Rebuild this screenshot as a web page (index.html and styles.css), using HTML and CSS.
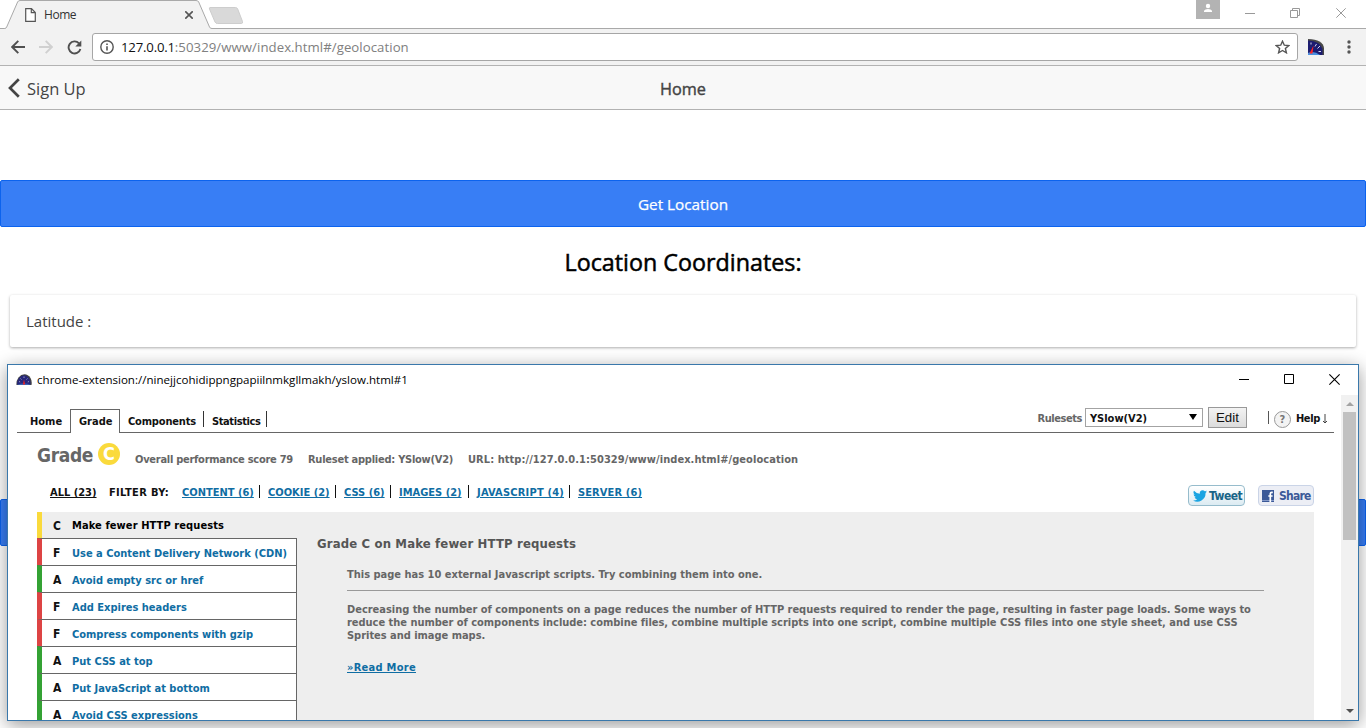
FILE: index.html
```html
<!DOCTYPE html>
<html lang="en">
<head>
<meta charset="utf-8">
<title>Home</title>
<link rel="stylesheet" href="styles.css">
</head>
<body>
<svg class="defs" width="0" height="0" aria-hidden="true">
  <symbol id="close" viewBox="0 0 10 10"><path d="M.3.3l9.4 9.4M9.7.3L.3 9.7" stroke="currentColor" fill="none"/></symbol>
</svg>

<header class="tabstrip">
  <svg class="tab-shape" width="246" height="29" viewBox="0 0 246 29">
    <path d="M0 28.5H4.5Q6 28.5 6.700 27L17.600 2Q18.300 .5 20 .5H196Q198 .5 198.700 2L209.500 27Q210.200 28.500 212 28.500H246V29H0Z" fill="#f2f2f2"/>
    <path d="M0 28.5H4.500Q6 28.500 6.700 27L17.600 2Q18.300 .5 20 .5H196Q198 .5 198.700 2L209.500 27Q210.200 28.500 212 28.500H246" fill="none" stroke="#a9a9a9"/>
    <path d="M210 7.500H235.500Q237 7.500 237.700 9L242.500 21.500Q243 23.500 241.500 23.500H217.500Q215.800 23.500 215 22L209.500 9Q209 7.500 210 7.500Z" fill="#d9d9d9" stroke="#cdcdcd"/>
  </svg>
  <div class="tab">
    <svg width="11" height="14" viewBox="0 0 11 14"><path d="M.7.7H6.500L10.300 4.500V13.300H.7ZM6.300 1V4.700H10" fill="#fff" stroke="#555" stroke-width="1.200"/></svg>
    <span class="tab-title">Home</span>
    <svg class="tab-close" width="8" height="8"><use href="#close"/></svg>
  </div>
  <div class="win-controls">
    <span class="user"><svg width="24" height="19" viewBox="0 0 24 19"><circle cx="12" cy="6" r="2.200" fill="#fff"/><path d="M8 12V10.700Q9 9 12 9T16 10.700V12Z" fill="#fff"/></svg></span>
    <svg class="min" width="10" height="10"><path d="M0 5.500H10" stroke="#999"/></svg>
    <svg class="restore" width="10" height="10"><path d="M.5 2.500H7.500V9.500H.5ZM2.500 2.500V.5H9.500V7.500H7.500" fill="none" stroke="#999"/></svg>
    <svg class="x" width="10" height="10"><use href="#close"/></svg>
  </div>
</header>

<div class="toolbar">
  <svg class="back" width="14" height="14" viewBox="0 0 14 14"><path d="M14 7H1.500M7.300 .8L1.200 7L7.300 13.200" fill="none" stroke="#505050" stroke-width="1.900"/></svg>
  <svg class="fwd" width="14" height="14" viewBox="0 0 14 14"><path d="M0 7H12.500M6.700 .8L12.800 7L6.700 13.200" fill="none" stroke="#d0d0d0" stroke-width="1.900"/></svg>
  <svg class="reload" width="15" height="15" viewBox="0 0 15 15"><path d="M12 3.300A6 6 0 1 0 13.400 9" fill="none" stroke="#505050" stroke-width="1.900"/><path d="M14.300 .5V6.500H8.300Z" fill="#505050"/></svg>
  <div class="omnibox">
    <svg width="14" height="14" viewBox="0 0 14 14"><circle cx="7" cy="7" r="6.200" fill="none" stroke="#555" stroke-width="1.400"/><path d="M7 6.200V10.500M7 3.500V5" stroke="#555" stroke-width="1.600"/></svg>
    <span class="url"><b>127.0.0.1</b>:50329/www/index.html#/geolocation</span>
    <svg class="star" width="15" height="14" viewBox="0 0 15 14"><path d="M7.500 1.200L9.300 5.200L13.700 5.600L10.400 8.500L11.400 12.800L7.500 10.500L3.600 12.800L4.600 8.500L1.300 5.600L5.700 5.200Z" fill="none" stroke="#555" stroke-width="1.400"/></svg>
  </div>
  <svg class="ext" width="16" height="16" viewBox="0 0 16 16"><path d="M0 0Q15 .5 16 9V16H0Z" fill="#484848"/><path d="M0 1.500Q12.500 2 14.500 10V16H0Z" fill="#1c1c70"/><path d="M0 14Q6 11.500 12 16H0Z" fill="#4a8fe0"/><path d="M3 3.500V5.500M8.500 5L7 7.500M12 7L9.500 9.500M13 12.500H10.500" stroke="#d5d5ee"/><path d="M5.500 6.500L4.500 14.500H1.500Z" fill="#f22"/></svg>
  <svg class="dots" width="4" height="14"><circle cx="2" cy="2" r="1.700" fill="#555"/><circle cx="2" cy="7" r="1.700" fill="#555"/><circle cx="2" cy="12" r="1.700" fill="#555"/></svg>
</div>

<main class="app">
  <nav class="app-bar">
    <a class="app-back"><svg width="12" height="20" viewBox="0 0 12 20"><path d="M10.800 1.200L2 10L10.800 18.800" fill="none" stroke="#444" stroke-width="2.700"/></svg>Sign Up</a>
    <h1>Home</h1>
    <span class="app-side"></span>
  </nav>
  <button class="btn btn-get">Get Location</button>
  <h2>Location Coordinates:</h2>
  <div class="card">Latitude :</div>
  <button class="btn btn-next"></button>
</main>

<section class="popup">
  <div class="titlebar">
    <svg width="16" height="11" viewBox="0 0 16 11"><path d="M.5 11Q0 7 2.500 3.500Q5 .3 8.500 .3Q12 .3 14.500 4Q16.300 7 15.500 11Z" fill="#444"/><path d="M1 10.500Q.8 7 3 4Q5.300 1.300 8 1.300Q11 1.300 13 4Q15 7 14.500 10.500Z" fill="#26267c"/><path d="M3 7.500L4.200 8M4.500 4.500L5.500 5.500M8 2.500V4M11.500 4.500L10.500 5.500M13 7.500L11.800 8" stroke="#99b"/><path d="M1.200 10.800Q8 8 14.500 10.800Z" fill="#3a6fd0"/><path d="M6.800 10.500L8 5.500L9.200 10.500Z" fill="#e22"/></svg>
    <span class="title">chrome-extension://ninejjcohidippngpapiilnmkgllmakh/yslow.html#1</span>
    <span class="title-controls">
      <svg width="10" height="10"><path d="M0 5.500H10" stroke="#000"/></svg>
      <svg width="10" height="10"><path d="M.5.5H9.500V9.500H.5Z" fill="none" stroke="#000"/></svg>
      <svg width="11" height="11"><use href="#close"/></svg>
    </span>
  </div>
  <div class="view">
    <div class="page">
      <div class="tabs">
        <a class="t-home">Home</a><a class="t-grade">Grade</a><a class="t-comp">Components</a><a class="t-stat">Statistics</a>
        <div class="tools">
          <label>Rulesets</label>
          <span class="select">YSlow(V2)<svg width="8" height="6"><path d="M0 0H8L4 6Z"/></svg></span>
          <button class="edit">Edit</button>
          <i class="bar"></i>
          <span class="q">?</span>
          <span class="help">Help</span>
          <svg class="arrow" width="6" height="10" viewBox="0 0 6 10"><path d="M3 0V9M1 7L3 9L5 7" fill="none" stroke="#444"/></svg>
        </div>
      </div>
      <div class="summary">
        <span class="grade">Grade</span><span class="badge">C</span>
        <span class="score">Overall performance score 79</span><span class="rules">Ruleset applied: YSlow(V2)</span><span class="link">URL: http://127.0.0.1:50329/www/index.html#/geolocation</span>
      </div>
      <div class="filters">
        <a class="all">ALL (23)</a><span class="by">FILTER BY:</span>
        <span class="f f1"><a>CONTENT (6)</a></span><span class="f f2"><a>COOKIE (2)</a></span><span class="f f3"><a>CSS (6)</a></span><span class="f f4"><a>IMAGES (2)</a></span><span class="f f5"><a>JAVASCRIPT (4)</a></span><span class="f f6"><a>SERVER (6)</a></span>
        <span class="social tweet"><svg width="14" height="12" viewBox="0 0 24 20"><path d="M24 2.400a10 10 0 0 1-2.800.8A5 5 0 0 0 23.300.5a10 10 0 0 1-3.100 1.200 4.900 4.900 0 0 0-8.400 4.500A14 14 0 0 1 1.700 1a4.900 4.900 0 0 0 1.500 6.600A5 5 0 0 1 1 7v.1a4.900 4.900 0 0 0 3.900 4.800 5 5 0 0 1-2.200.1 4.900 4.900 0 0 0 4.600 3.400A10 10 0 0 1 0 17.500 14 14 0 0 0 21.500 5a10 10 0 0 0 2.500-2.600z" fill="#1ba4e2"/></svg>Tweet</span>
        <span class="social share"><svg width="12" height="12" viewBox="0 0 12 12"><path d="M0 0H12V12H0Z" fill="#3b5998"/><path d="M0 10.500H12" stroke="#8499c8"/><path d="M10.800 2.300H9.800Q8.300 2.300 8.300 3.800V12M6.300 6H10.600" fill="none" stroke="#fff" stroke-width="1.700"/></svg>Share</span>
      </div>
      <div class="report">
        <ul class="rule-list">
          <li class="c on"><b>C</b>Make fewer HTTP requests</li>
          <li class="bad"><b>F</b>Use a Content Delivery Network (CDN)</li>
          <li class="ok"><b>A</b>Avoid empty src or href</li>
          <li class="bad"><b>F</b>Add Expires headers</li>
          <li class="bad"><b>F</b>Compress components with gzip</li>
          <li class="ok"><b>A</b>Put CSS at top</li>
          <li class="ok"><b>A</b>Put JavaScript at bottom</li>
          <li class="ok"><b>A</b>Avoid CSS expressions</li>
        </ul>
        <div class="detail">
          <h3>Grade C on Make fewer HTTP requests</h3>
          <div class="body">
            <p class="msg">This page has 10 external Javascript scripts. Try combining them into one.</p>
            <p class="desc">Decreasing the number of components on a page reduces the number of HTTP requests required to render the page, resulting in faster page loads. Some ways to<br>reduce the number of components include: combine files, combine multiple scripts into one script, combine multiple CSS files into one style sheet, and use CSS<br>Sprites and image maps.</p>
            <a class="more">»Read More</a>
          </div>
        </div>
      </div>
    </div>
    <div class="scroll">
      <svg width="8" height="4"><path d="M0 4L4 0L8 4Z" fill="#a3a3a3"/></svg>
      <i class="thumb"></i>
      <svg class="down" width="8" height="4"><path d="M0 0H8L4 4Z" fill="#505050"/></svg>
    </div>
  </div>
</section>
</body>
</html>
```
FILE: styles.css
```css
* { box-sizing: border-box; }
html, body { height: 728px; margin: 0; overflow: hidden; }
body { position: relative; background: #fff; font-family: "Open Sans", "Noto Sans", sans-serif; color: #444; }
svg { display: block; flex: none; }
.defs { position: absolute; }
h1, h2, h3, p, ul { margin: 0; padding: 0; font-weight: inherit; }
button { font-family: inherit; padding: 0; }

/* Browser frame */
.tabstrip { position: relative; height: 29px; display: flex; justify-content: space-between; background: #fff; border-bottom: 1px solid #a9a9a9; }
.tab-shape { position: absolute; left: 0; top: 0; }
.tab { position: relative; display: flex; align-items: center; width: 200px; height: 29px; padding-left: 25px; }
.tab-title { margin-left: 8px; font-size: 12px; letter-spacing: -.45px; color: #333; }
.tab-close { margin-left: auto; margin-right: 7px; color: #555; stroke-width: 2; }
.win-controls { display: flex; color: #999; }
.user { background: #b3b3b3; width: 24px; height: 19px; }
.min { margin: 8px 0 0 25px; }
.restore { margin: 8px 0 0 35px; }
.x { margin: 8px 20px 0 36px; }
.toolbar { display: flex; align-items: center; height: 37px; padding-left: 11px; background: #f2f2f2; border-bottom: 1px solid #b3b3b3; }
.fwd { margin-left: 14px; }
.reload { margin-left: 14px; }
.omnibox { display: flex; align-items: center; width: 1206px; height: 28px; margin-left: 10px; padding: 0 7px; background: #fff; border: 1px solid #a6a6a6; border-radius: 3px; }
.url { margin-left: 7px; font-size: 13.2px; letter-spacing: .06px; color: #808080; white-space: nowrap; }
.url b { font-weight: 400; color: #111; letter-spacing: -.2px; }
.star { margin-left: auto; }
.ext { margin-left: 10px; }
.dots { margin-left: 23px; }

/* Page */
.app { display: flex; flex-direction: column; height: 662px; }
.app-bar { display: flex; justify-content: space-between; align-items: center; height: 44px; padding: 2px 8px 0; background: #f8f8f8; border-bottom: 1px solid #b2b2b2; flex: none; }
.app-back, .app-side { width: 200px; }
.app-back { display: flex; align-items: center; gap: 7px; font-size: 16.5px; }
.app-back svg { margin-top: -2px; }
.app-bar h1 { font-size: 16.3px; -webkit-text-stroke: .4px; }
.btn { width: 100%; height: 47px; flex: none; border: 1px solid #0c63ee; border-radius: 2px; background: #387ef5; color: #fff; font-size: 15.3px; -webkit-text-stroke: .25px; }
.btn-get { margin-top: 70px; }
.app h2 { height: 68px; text-align: center; font-size: 23.3px; line-height: 70px; -webkit-text-stroke: .5px; color: #000; flex: none; }
.card { height: 52px; flex: none; margin: 0 10px; padding: 0 16px; line-height: 53px; font-size: 15px; border-radius: 2px; box-shadow: 0 1px 3px rgba(0,0,0,.32); }
.btn-next { margin-top: 152px; }

/* YSlow window */
.popup { position: absolute; left: 7px; top: 364px; width: 1352px; height: 357px; display: flex; flex-direction: column; background: #fff; border: 1px solid #3a78ab; box-shadow: 0 4px 17px rgba(0,0,0,.4); font-family: "DejaVu Sans Condensed", sans-serif; font-weight: 700; font-size: 11px; }
.titlebar { display: flex; align-items: center; height: 30px; flex: none; padding: 0 18px 2px 8px; color: #000; }
.title { margin-left: 5px; font-family: "Open Sans", sans-serif; font-weight: 400; font-size: 11.57px; }
.title-controls { display: flex; align-items: center; margin-left: auto; gap: 35px; }
.view { display: flex; flex: 1; min-height: 0; overflow: hidden; }
.page { flex: 1; padding-left: 9px; min-width: 0; }
.scroll { width: 17px; display: flex; flex-direction: column; align-items: center; background: #f1f1f1; padding-top: 7px; }
.thumb { width: 13px; height: 128px; margin-top: 6px; background: #c1c1c1; }
.down { margin-top: auto; margin-bottom: 7px; }

.tabs { display: flex; align-items: flex-start; width: 1317px; height: 38px; padding-top: 14px; border-bottom: 1px solid #666; color: #111; line-height: 14px; }
.tabs a { height: 24px; padding-top: 6px; }
.t-home { width: 53px; padding-left: 13px; }
.tabs .t-grade { width: 50px; padding: 5px 0 0 8px; background: #fff; border: 1px solid #666; border-bottom: 0; }
.tabs .t-comp, .tabs .t-stat { height: 16px; margin-top: 2px; padding-top: 4px; border-right: 1px solid #333; }
.t-comp { width: 84px; padding-left: 8px; letter-spacing: -.17px; }
.t-stat { width: 63px; padding-left: 8px; letter-spacing: -.4px; }
.tools { display: flex; align-items: flex-start; margin-left: auto; margin-top: -3px; padding-right: 6px; }
.tools label { margin-top: 6px; color: #666; letter-spacing: -.45px; }
.select { display: flex; justify-content: space-between; width: 118px; height: 19px; margin: 2px 0 0 3px; padding: 3px 5px 0 4px; border: 1px solid #a3a3a3; }
.select svg { margin-top: 2px; }
.edit { width: 39px; height: 21px; margin: 1px 0 0 5px; border: 1px solid #999; background: linear-gradient(#f3f3f3, #dcdcdc); font: 13.3px "Liberation Sans", sans-serif; color: #111; }
.bar { width: 1px; height: 13px; margin: 5px 0 0 21px; background: #555; }
.q { width: 17px; height: 17px; margin: 5px 0 0 5px; border: 1px solid #999; border-radius: 50%; background: #f3f3f3; color: #777; text-align: center; line-height: 15px; }
.help { margin: 6px 0 0 5px; letter-spacing: -.35px; }
.arrow { margin: 8px 0 0 2px; }

.summary { display: flex; height: 46px; padding: 0 0 0 20px; color: #666; line-height: 14px; white-space: nowrap; }
.grade { width: 61px; font-size: 19px; letter-spacing: -.35px; line-height: 22px; margin-top: 11px; }
.badge { width: 22px; height: 22px; margin-top: 10px; border-radius: 50%; background: #fada3c; color: #fff; font: 700 18px/22px "DejaVu Sans Condensed", sans-serif; text-align: center; }
.score, .rules, .link { margin-top: 20px; }
.score { width: 173px; margin-left: 15px; letter-spacing: -.27px; }
.rules { width: 160px; letter-spacing: -.25px; }
.link { letter-spacing: .06px; }

.filters { display: flex; align-items: flex-start; width: 1297px; height: 33px; padding: 6px 0 0 33px; color: #111; line-height: 16px; white-space: nowrap; }
.filters a { text-decoration: underline; text-underline-offset: 1px; }
.all { width: 59px; }
.by { width: 73px; letter-spacing: .34px; }
.f { height: 13px; color: #0f6da3; }
.f + .f { padding-left: 8px; }
.f:not(.f6) { border-right: 1px solid #111; }
.f1 { width: 78px; } .f2 { width: 76px; } .f3 { width: 55px; } .f4 { width: 78px; } .f5 { width: 101px; letter-spacing: .2px; } .f6 { letter-spacing: .11px; }
.social { display: flex; align-items: center; height: 21px; border-radius: 4px; font-size: 12px; border: 1px solid #96bccc; }
.tweet { width: 57px; margin-left: auto; padding-left: 4px; gap: 2px; letter-spacing: -.57px; background: linear-gradient(#fff, #dcebf2); color: #186487; }
.share { width: 56px; margin-left: 13px; padding-left: 3px; gap: 5px; letter-spacing: -.75px; background: #eceef5; border-color: #cad4e7; color: #3b5998; }

.report { display: flex; width: 1277px; height: 300px; margin-left: 20px; background: #eee; }
.rule-list { width: 260px; flex: none; list-style: none; }
.rule-list li { display: flex; height: 27px; line-height: 29px; background: #fff; border: solid #666; border-width: 1px 1px 0 5px; color: #0f6da3; white-space: nowrap; }
.rule-list b { width: 30px; padding-left: 11px; font: 700 12px/28px "DejaVu Sans Condensed", sans-serif; color: #111; }
.rule-list .on { height: 26px; line-height: 28px; background: none; border-width: 0 0 0 5px; color: #000; letter-spacing: .09px; }
.rule-list .c { border-left-color: #fada3c; }
.rule-list .bad { border-left-color: #d44; }
.rule-list .ok { border-left-color: #34a234; }
.detail { padding: 24px 0 0 20px; color: #666; }
.detail h3 { font-size: 13px; line-height: 16px; letter-spacing: .15px; color: #555; }
.body { width: 917px; margin: 15px 0 0 30px; line-height: 15px; white-space: nowrap; }
.msg { height: 24px; border-bottom: 1px solid #999; }
.desc { margin-top: 12px; line-height: 13px; letter-spacing: -.026px; }
.more { display: inline-block; margin-top: 18px; color: #0f6da3; text-decoration: underline; text-underline-offset: 1px; letter-spacing: .28px; }
```
